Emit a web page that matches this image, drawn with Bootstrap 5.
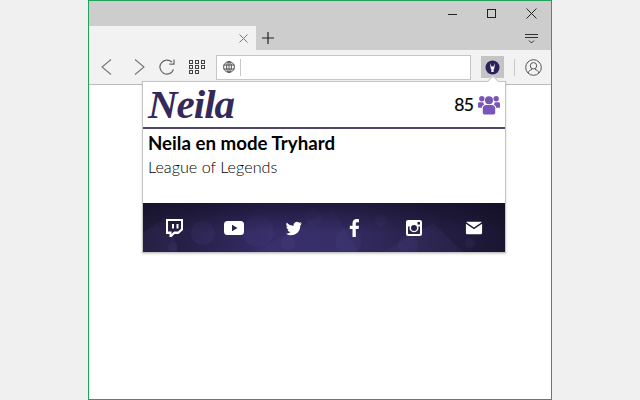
<!DOCTYPE html>
<html lang="en">
<head>
  <meta charset="UTF-8" />
  <title>Neila</title>
  <link href="https://cdn.jsdelivr.net/npm/bootstrap@5.3.0/dist/css/bootstrap.min.css" rel="stylesheet" />
  <style>
    html, body { height: 400px; overflow: hidden; }
    body { background: #f0f0f0; font-family: "Lato", "Liberation Sans", sans-serif; }
    .browser-win { width: 464px; height: 400px; margin-left: 88px; background: #fff; border: 1px solid #1fa35a; position: relative; }
    .title-strip { height: 25px; background: #cdcdcd; padding-right: 14px; gap: 29px; }
    .tab-strip { height: 24px; background: #cdcdcd; }
    .tab-shape { width: 167px; height: 24px; background: #f2f2f2; padding-right: 8px; }
    .tab-plus { margin-left: 6px; }
    .tab-menu { margin-right: 13px; }
    .tool-strip { height: 35px; background: #f2f2f2; border-bottom: 1px solid #bcbcbc; padding-left: 12px; }
    .nav-back { margin-right: 22px; }
    .nav-fwd, .nav-reload { margin-right: 14px; }
    .addr-box { width: 255px; height: 25px; background: #fff; border: 1px solid #c6c6c6; margin-left: 10px; padding-left: 6px; }
    .addr-sep { width: 1px; height: 17px; background: #c8c8c8; margin-left: 5px; }
    .ext-btn { width: 23px; height: 22px; background: #c4c4c4; margin-left: 10px; }
    .tool-sep { width: 1px; height: 17px; background: #c8c8c8; margin-left: 10px; margin-right: 10px; }
    .popup-box { position: absolute; left: 53px; top: 80px; width: 364px; height: 172px; background: #fff; border: 1px solid #c4c4c4; box-shadow: 0 1px 2px rgba(0,0,0,.18); }
    .popup-arrow { position: absolute; left: 346px; top: -5px; width: 8px; height: 8px; background: #fff; border-left: 1px solid #c4c4c4; border-top: 1px solid #c4c4c4; transform: rotate(45deg); }
    .popup-head { height: 47px; padding: 0 5px; border-bottom: 2px solid #4d4668; }
    .logo-word { font-family: "Liberation Serif", serif; font-style: italic; font-weight: 700; font-size: 41px; line-height: 45px; letter-spacing: -1px; color: #35295c; }
    .count-num { font-size: 17.5px; letter-spacing: -.8px; color: #000; margin-right: 5px; line-height: 1; -webkit-text-stroke: .2px #000; }
    .stream-body { height: 74px; padding: 2px 5px 0; }
    .stream-title { font-size: 18.7px; font-weight: 700; line-height: 24px; color: #000; margin: 0; }
    .stream-game { font-size: 16.2px; font-weight: 300; line-height: 23px; color: #000; margin: 0; }
    .social-bar { height: 49px; position: relative; background: #272046; overflow: hidden; }
    .social-bg { position: absolute; inset: 0; }
    .social-row { position: relative; height: 49px; padding: 0 21px; }
    .social-slot { width: 20px; }
  </style>
</head>
<body>
  <div class="browser-win">
    <div class="title-strip d-flex justify-content-end align-items-center">
      <svg width="10" height="10" viewBox="0 0 10 10"><path d="M0 5.5H9" stroke="#222" stroke-width="1"/></svg>
      <svg width="10" height="10" viewBox="0 0 10 10"><rect x=".5" y=".5" width="8" height="8" fill="none" stroke="#222"/></svg>
      <svg width="11" height="11" viewBox="0 0 11 11"><path d="M.5.5L10.5 10.5M10.5.5L.5 10.5" stroke="#222" stroke-width="1"/></svg>
    </div>
    <div class="tab-strip d-flex align-items-center">
      <div class="tab-shape d-flex justify-content-end align-items-center">
        <svg width="9" height="9" viewBox="0 0 9 9"><path d="M.5.5L8.5 8.5M8.5.5L.5 8.5" stroke="#777" stroke-width="1"/></svg>
      </div>
      <svg class="tab-plus" width="12" height="12" viewBox="0 0 12 12"><path d="M6 0V12M0 6H12" stroke="#222" stroke-width="1.2"/></svg>
      <svg class="tab-menu ms-auto" width="13" height="11" viewBox="0 0 13 11"><path d="M0 1.5H13M0 4.5H13" stroke="#333" stroke-width="1"/><path d="M4 7.5L6.5 10L9 7.5" fill="none" stroke="#333" stroke-width="1"/></svg>
    </div>
    <div class="tool-strip d-flex align-items-center">
      <svg class="nav-back" width="11" height="16" viewBox="0 0 11 16"><path d="M10 .5L1 8L10 15.5" fill="none" stroke="#777" stroke-width="1.1"/></svg>
      <svg class="nav-fwd" width="11" height="16" viewBox="0 0 11 16"><path d="M1 .5L10 8L1 15.5" fill="none" stroke="#777" stroke-width="1.1"/></svg>
      <svg class="nav-reload" width="16" height="16" viewBox="0 0 16 16"><path d="M14.5 10.5A7 7 0 1 1 13 3.2" fill="none" stroke="#666" stroke-width="1.2"/><path d="M15 .5V5.2H10.3" fill="none" stroke="#666" stroke-width="1.2"/></svg>
      <svg width="17" height="14" viewBox="0 0 17 14" fill="none" stroke="#444" stroke-width="1"><rect x=".5" y=".5" width="3" height="3"/><rect x="6.5" y=".5" width="3" height="3"/><rect x="12.5" y=".5" width="3" height="3"/><rect x=".5" y="5.5" width="3" height="3"/><rect x="6.5" y="5.5" width="3" height="3"/><rect x="12.5" y="5.5" width="3" height="3"/><rect x=".5" y="10.5" width="3" height="3"/><rect x="6.5" y="10.5" width="3" height="3"/></svg>
      <div class="addr-box d-flex align-items-center">
        <svg width="12" height="12" viewBox="0 0 12 12" fill="none" stroke="#444" stroke-width=".9"><circle cx="6" cy="6" r="5.4"/><ellipse cx="6" cy="6" rx="2.4" ry="5.4"/><path d="M.6 4H11.4M.6 8H11.4M6 .6V11.4"/></svg>
        <div class="addr-sep"></div>
      </div>
      <div class="ext-btn d-flex justify-content-center align-items-center">
        <svg width="15" height="15" viewBox="0 0 15 15"><circle cx="7.5" cy="7.5" r="7" fill="#2b1f5e"/><path d="M5 3L6.5 6.5H8.5L10 3L9.3 8.5L8.6 9.5V12H6.4V9.5L5.7 8.5Z" fill="#fff"/></svg>
      </div>
      <div class="tool-sep"></div>
      <svg width="17" height="17" viewBox="0 0 17 17" fill="none" stroke="#555" stroke-width="1"><circle cx="8.5" cy="8.5" r="7.8"/><circle cx="8.5" cy="6.8" r="3.2"/><path d="M3 14C3.6 11.6 5.6 11 7 10.4M14 14C13.4 11.6 11.4 11 10 10.4"/></svg>
    </div>

    <div class="popup-box">
      <div class="popup-arrow"></div>
      <div class="popup-head d-flex justify-content-between align-items-center">
        <span class="logo-word">Neila</span>
        <div class="d-flex align-items-center">
          <span class="count-num">85</span>
          <svg width="22" height="20" viewBox="0 0 23 20" fill="#7a55b8"><circle cx="4" cy="3.5" r="2.8"/><circle cx="19" cy="3.5" r="2.8"/><circle cx="11.5" cy="5" r="4.2"/><path d="M0 8.5C0 7.5 1 7 2 7H5.5C5.6 8 6 9 6.5 9.6C4.8 10.4 4.2 11.6 4 13H1C.4 13 0 12.6 0 12Z"/><path d="M23 8.5C23 7.5 22 7 21 7H17.5C17.4 8 17 9 16.5 9.6C18.2 10.4 18.8 11.6 19 13H22C22.6 13 23 12.6 23 12Z"/><path d="M5 13.5C5 11.5 6.5 10 8.5 10H14.5C16.5 10 18 11.5 18 13.5V18C18 19 17 20 16 20H7C6 20 5 19 5 18Z"/></svg>
        </div>
      </div>
      <div class="stream-body">
        <p class="stream-title">Neila en mode Tryhard</p>
        <p class="stream-game">League of Legends</p>
      </div>
      <div class="social-bar">
        <svg class="social-bg" width="362" height="49" viewBox="0 0 362 49">
          <defs>
            <linearGradient id="bgShade" x1="0" x2="1" y1="0" y2="0">
              <stop offset="0" stop-color="#1f1a38"/>
              <stop offset=".35" stop-color="#352c66"/>
              <stop offset=".6" stop-color="#322a5e"/>
              <stop offset="1" stop-color="#1a1530"/>
            </linearGradient>
            <linearGradient id="bgFade" x1="0" x2="0" y1="0" y2="1">
              <stop offset="0" stop-color="#110d22" stop-opacity=".6"/>
              <stop offset=".6" stop-color="#110d22" stop-opacity="0"/>
            </linearGradient>
          </defs>
          <rect width="362" height="49" fill="url(#bgShade)"/>
          <g fill="#5a4f9a" fill-opacity=".12">
            <path d="M110 49L190 6L215 49Z"/>
            <path d="M0 30L25 12L35 49H0Z"/>
            <path d="M240 49L290 20L320 49Z"/>
            <circle cx="60" cy="30" r="12"/>
            <circle cx="115" cy="28" r="16"/>
            <circle cx="145" cy="40" r="7"/>
            <circle cx="170" cy="14" r="9"/>
            <circle cx="205" cy="38" r="13"/>
            <circle cx="238" cy="18" r="6"/>
            <circle cx="265" cy="42" r="10"/>
            <circle cx="327" cy="40" r="5"/>
            <circle cx="30" cy="44" r="5"/>
          </g>
          <rect width="362" height="49" fill="url(#bgFade)"/>
        </svg>
        <div class="social-row d-flex justify-content-between align-items-center">
          <svg class="social-slot" width="20" height="20" viewBox="0 0 20 20"><path fill="#fff" fill-rule="evenodd" d="M2 1H19V12L14.5 16H10.5L7.5 19H5.5V16H2ZM4 3V13.5H7.5V16L10 13.5H14L17 10.8V3ZM8 6H10V10.5H8ZM12.5 6H14.5V10.5H12.5Z"/></svg>
          <svg class="social-slot" width="20" height="20" viewBox="0 0 20 20"><rect y="3" width="20" height="14" rx="3.5" fill="#fff"/><path d="M8 6.8L13.5 10L8 13.2Z" fill="#2a2350"/></svg>
          <svg class="social-slot" width="20" height="20" viewBox="-3 -3 30 30"><path fill="#fff" d="M23.5 5c-.9.4-1.8.6-2.8.8 1-.6 1.8-1.5 2.1-2.7-.9.6-2 1-3.100 1.200A4.900 4.900 0 0 0 11.400 8.800 13.900 13.900 0 0 1 1.300 3.700a4.900 4.900 0 0 0 1.500 6.500c-.8 0-1.500-.2-2.200-.6 0 2.400 1.700 4.400 3.900 4.900-.7.2-1.500.2-2.200.1.6 2 2.400 3.400 4.600 3.400A9.800 9.800 0 0 1 0 20.500 13.900 13.900 0 0 0 21.400 8.100c1-.7 1.800-1.600 2.100-3.100z"/></svg>
          <svg class="social-slot" width="20" height="20" viewBox="0 0 20 20"><path fill="#fff" d="M11.800 19V11H14.600L15 7.800H11.800V5.900C11.800 5 12.100 4.300 13.300 4.300H15V1.300C14.500 1.200 13.700 1.100 12.700 1.100 10.200 1.100 8.500 2.600 8.500 5.500V7.800H5.800V11H8.500V19Z"/></svg>
          <svg class="social-slot" width="20" height="20" viewBox="0 0 20 20"><path fill="#fff" fill-rule="evenodd" d="M4 2H16C17.100 2 18 2.900 18 4V16C18 17.100 17.100 18 16 18H4C2.900 18 2 17.100 2 16V4C2 2.900 2.900 2 4 2ZM13.500 4V6.500H16V4ZM4 8.500V15.500C4 15.800 4.200 16 4.500 16H15.500C15.800 16 16 15.800 16 15.500V8.500H14.300A4.500 4.500 0 1 1 5.700 8.500ZM10 7A3 3 0 1 0 10 13 3 3 0 0 0 10 7Z"/></svg>
          <svg class="social-slot" width="20" height="20" viewBox="-2 -2 24 24"><path fill="#fff" d="M2 2.500H18C18.500 2.500 18.900 2.700 19.200 3.100L10 9.500L.8 3.100C1.100 2.700 1.500 2.500 2 2.500Z"/><path fill="#fff" d="M.3 4.800L10 11.500L19.700 4.800V16C19.700 16.800 19 17.500 18.200 17.500H1.800C1 17.500.3 16.800.3 16Z"/></svg>
        </div>
      </div>
    </div>
  </div>
  <script src="https://cdn.jsdelivr.net/npm/bootstrap@5.3.0/dist/js/bootstrap.bundle.min.js"></script>
</body>
</html>
